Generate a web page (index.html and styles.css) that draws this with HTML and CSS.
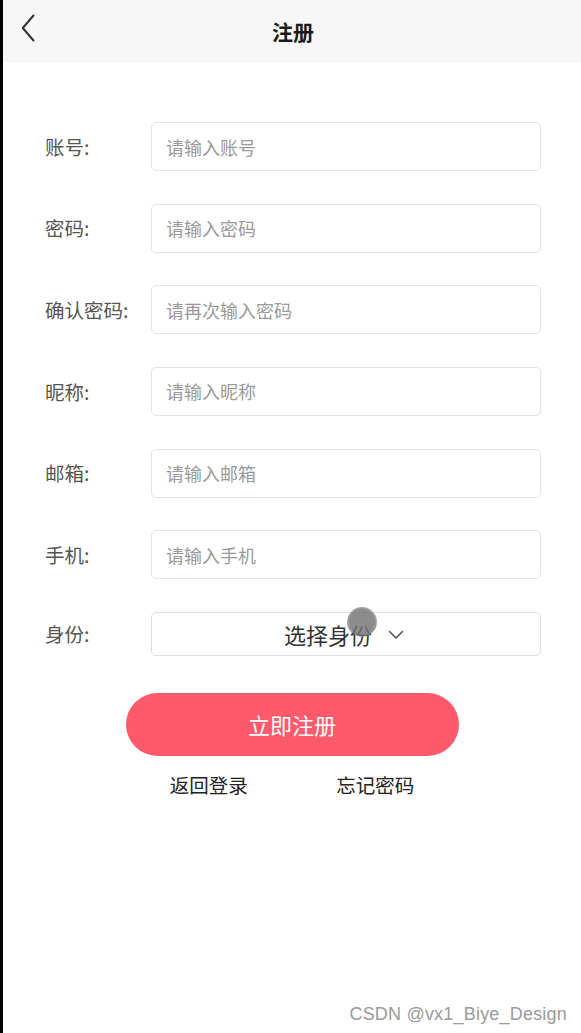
FILE: index.html
```html
<!DOCTYPE html>
<html lang="zh-CN">
<head>
<meta charset="utf-8">
<title>注册</title>
<link rel="stylesheet" href="styles.css">
</head>
<body>
<div class="page">
  <header class="nav">
    <svg class="nav-back" width="14" height="28" viewBox="0 0 14 28" aria-hidden="true">
      <path d="M12.5 1.5 L1.8 14 L12.5 26.5" fill="none" stroke="#333" stroke-width="2" stroke-linecap="round" stroke-linejoin="round"/>
    </svg>
    <h1 class="nav-title">注册</h1>
  </header>

  <form class="form">
    <div class="row"><label class="label">账号:</label><input class="input" placeholder="请输入账号"></div>
    <div class="row"><label class="label">密码:</label><input class="input" type="password" placeholder="请输入密码"></div>
    <div class="row"><label class="label">确认密码:</label><input class="input" type="password" placeholder="请再次输入密码"></div>
    <div class="row"><label class="label">昵称:</label><input class="input" placeholder="请输入昵称"></div>
    <div class="row"><label class="label">邮箱:</label><input class="input" placeholder="请输入邮箱"></div>
    <div class="row"><label class="label">手机:</label><input class="input" placeholder="请输入手机"></div>
    <div class="row row-select">
      <label class="label">身份:</label>
      <div class="select">
        <span class="select-text">选择身份</span>
        <svg class="select-arrow" width="16" height="10" viewBox="0 0 16 10" aria-hidden="true">
          <path d="M1.5 1.5 L8 8 L14.5 1.5" fill="none" stroke="#555" stroke-width="1.6" stroke-linecap="round" stroke-linejoin="round"/>
        </svg>
        <span class="touch"></span>
      </div>
    </div>
  </form>

  <div class="actions">
    <button class="btn" type="button">立即注册</button>
    <div class="links">
      <a class="link">返回登录</a>
      <a class="link">忘记密码</a>
    </div>
  </div>

  <div class="watermark">CSDN @vx1_Biye_Design</div>
</div>
</body>
</html>
```

FILE: styles.css
```css
* { box-sizing: border-box; }
html, body { margin: 0; padding: 0; background: #fff; }
body {
  font-family: "Noto Sans CJK SC", "Noto Sans", sans-serif;
}
.page {
  position: relative;
  width: 581px;
  min-height: 1033px;
  border-left: 3px solid #000;
  background: #fff;
}
.nav {
  height: 62px;
  background: #f7f7f7;
  display: flex;
  align-items: center;
  justify-content: center;
  position: relative;
}
.nav-back {
  position: absolute;
  left: 18px;
  top: 14px;
}
.nav-title {
  margin: 0 0 0 2px;
  font-size: 21px;
  font-weight: 700;
  color: #1a1a1a;
  line-height: 1;
}
.form {
  padding: 60px 40px 0 42px;
  display: flex;
  flex-direction: column;
  gap: 32.67px;
}
.row {
  display: flex;
  align-items: center;
}
.label {
  width: 106px;
  flex: none;
  font-size: 19.5px;
  color: #555;
  line-height: 1;
}
.input {
  flex: 1;
  min-width: 0;
  height: 49px;
  border: 1px solid #e3e3e3;
  border-radius: 5px;
  padding: 0 14px;
  font-family: inherit;
  font-size: 18px;
  color: #333;
  outline: none;
  background: #fff;
}
.input::placeholder { color: #9a9a9a; }
.select {
  position: relative;
  flex: 1;
  height: 44px;
  border: 1px solid #e0e0e0;
  border-radius: 5px;
  display: flex;
  align-items: center;
  justify-content: center;
  gap: 16px;
  padding-right: 4px;
}
.select-text {
  font-size: 22px;
  color: #333;
  line-height: 1;
}
.select-arrow { margin-top: 2px; }
.touch {
  position: absolute;
  left: 195px;
  top: -6px;
  width: 30px;
  height: 30px;
  border-radius: 50%;
  background: radial-gradient(circle, rgba(115,115,115,0.82) 0 58%, rgba(140,140,140,0.55) 80%, rgba(180,180,180,0.15) 100%);
}
.actions {
  width: 333px;
  margin: 37px auto 0;
}
.btn {
  display: block;
  width: 100%;
  height: 63px;
  border: none;
  border-radius: 32px;
  background: #ff5a6b;
  color: #fff;
  font-family: inherit;
  font-size: 22px;
  line-height: 1;
  padding: 0;
}
.links {
  display: flex;
  justify-content: space-around;
  margin-top: 15px;
}
.link {
  font-size: 19.5px;
  color: #222;
  line-height: 28px;
}
.watermark {
  position: absolute;
  right: 14px;
  bottom: 8px;
  font-family: "Liberation Sans", "Noto Sans", sans-serif;
  font-size: 18px;
  color: #9a9a9a;
  letter-spacing: 0.2px;
}
```
